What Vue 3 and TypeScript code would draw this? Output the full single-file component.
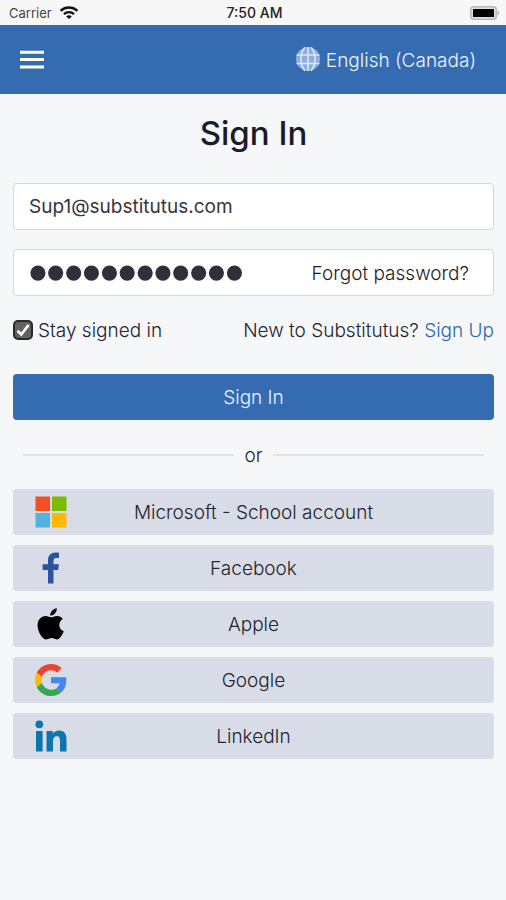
<script setup lang="ts">
import { ref } from 'vue'

interface Provider {
  id: string
  label: string
}

const providers: Provider[] = [
  { id: 'microsoft', label: 'Microsoft - School account' },
  { id: 'facebook', label: 'Facebook' },
  { id: 'apple', label: 'Apple' },
  { id: 'google', label: 'Google' },
  { id: 'linkedin', label: 'LinkedIn' },
]

const email = ref<string>('Sup1@substitutus.com')
const password = ref<string>('substitute12')
const staySignedIn = ref<boolean>(true)
</script>

<template>
  <div class="screen">
    <div class="status">
      <div class="carrier">
        <span>Carrier</span>
        <svg class="wifi" viewBox="0 0 18 14" aria-hidden="true">
          <g fill="none" stroke="#111" stroke-width="2.4">
            <path d="M0.6 4.8C5.3 0.4 12.7 0.4 17.4 4.8" />
            <path d="M4 8.2C6.8 5.4 11.2 5.4 14 8.2" />
          </g>
          <path d="M9 13L6.2 10.4C7.8 9 10.2 9 11.8 10.4Z" fill="#111" />
        </svg>
      </div>
      <span class="time">7:50 AM</span>
      <svg class="battery" viewBox="0 0 30 14" aria-hidden="true">
        <rect x="0.75" y="0.75" width="25.5" height="12.5" rx="3" fill="#e0e0e0" stroke="#b9b9b9" stroke-width="1.5" />
        <rect x="3" y="3" width="21" height="8" rx="0.5" fill="#000" />
        <path d="M27.5 4.5C29.7 5 29.7 9 27.5 9.5Z" fill="#b5b5b5" />
      </svg>
    </div>

    <header class="bar">
      <button class="menu" type="button" aria-label="Menu">
        <svg viewBox="0 0 26 20" aria-hidden="true">
          <path d="M1 2.3H25M1 9.6H25M1 17H25" stroke="#fff" stroke-width="3" />
        </svg>
      </button>
      <button class="language" type="button">
        <svg viewBox="0 0 26 26" aria-hidden="true">
          <circle cx="13" cy="12" r="12" fill="#8eafdb" />
          <g fill="none" stroke="#dce9fa" stroke-width="1.5">
            <path d="M13 0V24M1.5 8H24.5M1.5 16.5H24.5" />
            <path d="M10 0.3C4.5 7 4.5 17 10 23.7M16 0.3C21.5 7 21.5 17 16 23.7" />
          </g>
        </svg>
        <span class="text">English (Canada)</span>
      </button>
    </header>

    <main>
      <h1>Sign In</h1>
      <form @submit.prevent>
        <div class="field">
          <input v-model="email" class="email" type="email" aria-label="Email" />
        </div>
        <div class="field">
          <input v-model="password" class="secret" type="password" aria-label="Password" />
          <a class="forgot text" href="#">Forgot password?</a>
        </div>
        <div class="options">
          <label class="stay">
            <input v-model="staySignedIn" type="checkbox" />
            <svg viewBox="0 0 20 20" aria-hidden="true">
              <rect x="1" y="1" width="18" height="18" rx="4" fill="#626262" stroke="#292929" stroke-width="2" />
              <path v-if="staySignedIn" d="M4.5 10.8L8.3 14.5L15.5 5" fill="none" stroke="#fff" stroke-width="2.6" />
            </svg>
            <span class="text">Stay signed in</span>
          </label>
          <p class="text">New to Substitutus? <a href="#">Sign Up</a></p>
        </div>
        <button class="submit" type="submit"><span class="text">Sign In</span></button>
      </form>

      <div class="divider"><span class="text">or</span></div>

      <div class="providers">
        <button v-for="p in providers" :key="p.id" class="provider" type="button">
          <svg viewBox="0 0 32 32" aria-hidden="true">
            <template v-if="p.id === 'microsoft'">
              <path d="M0.5 0.5H15V15H0.5Z" fill="#f25022" />
              <path d="M17 0.5H31.5V15H17Z" fill="#7fba00" />
              <path d="M0.5 17H15V31.5H0.5Z" fill="#55b1de" />
              <path d="M17 17H31.5V31.5H17Z" fill="#ffb900" />
            </template>
            <path
              v-else-if="p.id === 'facebook'"
              d="M13 31.5V18H7.6V12.2H13V8.5C13 3.2 16 0.5 20.6 0.5C22.4 0.5 23.6 0.6 24 0.7V6H21.5C19 6 18.5 7.2 18.5 9V12.2H24L23.2 18H18.5V31.5Z"
              fill="#2d529f"
            />
            <g v-else-if="p.id === 'apple'" fill="#000">
              <path d="M21.8 0.3C22.1 4.3 18.7 7.8 15.2 7.5C14.9 4 18.3 0.7 21.8 0.3Z" />
              <path d="M16.3 9.3C17.8 9.3 19.5 7.8 22.2 7.9C24.5 8 26.5 9 27.8 10.9C22.6 14.1 23.4 21 28.7 23.2C27.8 26 25 31.2 22 31.4C19.9 31.5 19.2 30.1 16.7 30.1C14.2 30.1 13.4 31.4 11.4 31.4C7.4 31.5 2.6 23.8 2.6 17.4C2.6 11.3 6.6 8.1 10.4 8C12.9 8 14.8 9.3 16.3 9.3Z" />
            </g>
            <g v-else-if="p.id === 'google'" transform="scale(0.6667)">
              <path d="M46.98 24.55c0-1.57-.15-3.09-.38-4.55H24v9.02h12.94c-.58 2.96-2.26 5.48-4.78 7.18l7.73 6c4.51-4.18 7.09-10.36 7.09-17.65z" fill="#4285f4" />
              <path d="M24 9.5c3.54 0 6.71 1.22 9.21 3.6l6.85-6.85C35.9 2.38 30.47 0 24 0 14.62 0 6.51 5.38 2.56 13.22l7.98 6.19C12.43 13.72 17.74 9.5 24 9.5z" fill="#ea4335" />
              <path d="M10.53 28.59c-.48-1.45-.76-2.99-.76-4.59s.27-3.14.76-4.59l-7.98-6.19C.92 16.46 0 20.12 0 24s.92 7.54 2.56 10.78l7.97-6.19z" fill="#fbbc05" />
              <path d="M24 48c6.48 0 11.93-2.13 15.89-5.81l-7.73-6c-2.15 1.45-4.92 2.3-8.16 2.3-6.26 0-11.57-4.22-13.47-9.91l-7.98 6.19C6.51 42.62 14.62 48 24 48z" fill="#34a853" />
            </g>
            <g v-else fill="#0e76ad">
              <circle cx="4.3" cy="4.3" r="3.9" />
              <path d="M1 11H7.6V31.5H1Z" />
              <path d="M11.5 11H17.8V13.8C19 11.8 21 10.5 24 10.5C30 10.5 31.5 14.4 31.5 20V31.5H25V21.3C25 18.2 24.5 16.2 21.8 16.2C19 16.2 18 18.2 18 21.2V31.5H11.5Z" />
            </g>
          </svg>
          <span class="text">{{ p.label }}</span>
        </button>
      </div>
    </main>
  </div>
</template>

<style>
body {
  margin: 0;
  background: #f5f7f9;
}
</style>

<style scoped>
.screen {
  min-height: 100vh;
  font-family: Inter, "Liberation Sans", sans-serif;
  font-size: 19px;
  font-weight: 300;
  line-height: 24px;
  color: #24242e;
  background: #f5f7f9;
}

button,
input {
  font: inherit;
  color: inherit;
}

button {
  border: 0;
  padding: 0;
  cursor: pointer;
}

a {
  color: #2b66b5;
  text-decoration: none;
}

.text {
  display: inline-block;
  padding-top: 2px;
}

.status {
  display: grid;
  grid-template-columns: 1fr auto 1fr;
  align-items: center;
  height: 25px;
  padding: 0 6px 0 9px;
  background: #f7f7f8;
  font-size: 13px;
}

.carrier {
  display: flex;
  align-items: center;
  gap: 10px;
  font-weight: 400;
  color: #444;
}

.carrier span {
  font-size: 13px;
}

.carrier {
  gap: 8px;
}

.wifi {
  width: 18px;
  height: 14px;
}

.time {
  color: #222;
  font-size: 14px;
  font-weight: 500;
}

.battery {
  justify-self: end;
  width: 30px;
  height: 14px;
}

.bar {
  display: flex;
  align-items: center;
  justify-content: space-between;
  height: 69px;
  padding: 0 30px 0 19px;
  background: #356bb0;
}

.menu {
  display: flex;
  background: none;
}

.menu svg {
  width: 26px;
  height: 20px;
}

.language {
  display: flex;
  align-items: center;
  gap: 5px;
  background: none;
  color: #ecf4ff;
}

.language svg {
  width: 26px;
  height: 26px;
}

main {
  padding: 19px 12px 40px 13px;
}

h1 {
  margin: 0 0 30px;
  text-align: center;
  font-size: 33px;
  line-height: 40px;
  font-weight: 500;
  color: #1b1a2b;
}

.field {
  display: flex;
  align-items: center;
  box-sizing: border-box;
  height: 47px;
  margin-bottom: 19px;
  padding: 0 24px 0 15px;
  border: 1px solid #d3d7e0;
  border-radius: 4px;
  background: #fff;
}

.field input {
  flex: 1;
  min-width: 0;
  height: 40px;
  padding: 0;
  border: 0;
  outline: 0;
  background: none;
}

.field .email {
  font-weight: 400;
  color: #35353c;
}

.field .secret {
  font-family: "Liberation Serif", serif;
  font-size: 51px;
  font-weight: 400;
  color: #30303d;
  -webkit-text-stroke: 3px #30303d;
}

.options {
  display: flex;
  align-items: center;
  justify-content: space-between;
  margin: 21px 0 31px;
}

.forgot {
  color: #1d1d22;
}

.stay {
  position: relative;
  display: flex;
  align-items: center;
  gap: 5px;
}

.stay input {
  position: absolute;
  width: 20px;
  height: 20px;
  margin: 0;
  opacity: 0;
}

.stay svg {
  width: 20px;
  height: 20px;
}

.options p {
  margin: 0;
}

.submit {
  display: block;
  width: 100%;
  height: 46px;
  border-radius: 4px;
  background: #356bb0;
  color: #ecf4ff;
}

.divider {
  display: flex;
  align-items: center;
  gap: 10px;
  margin: 22px 10px 21px;
}

.divider::before,
.divider::after {
  content: "";
  flex: 1;
  height: 2px;
  background: #e0e3e7;
}

.providers {
  display: grid;
  gap: 10px;
}

.provider {
  display: grid;
  grid-template-columns: 32px 1fr 32px;
  align-items: center;
  height: 46px;
  padding: 0 22px;
  border-radius: 4px;
  background: #d7dce6;
}

.provider svg {
  width: 32px;
  height: 32px;
}
</style>
